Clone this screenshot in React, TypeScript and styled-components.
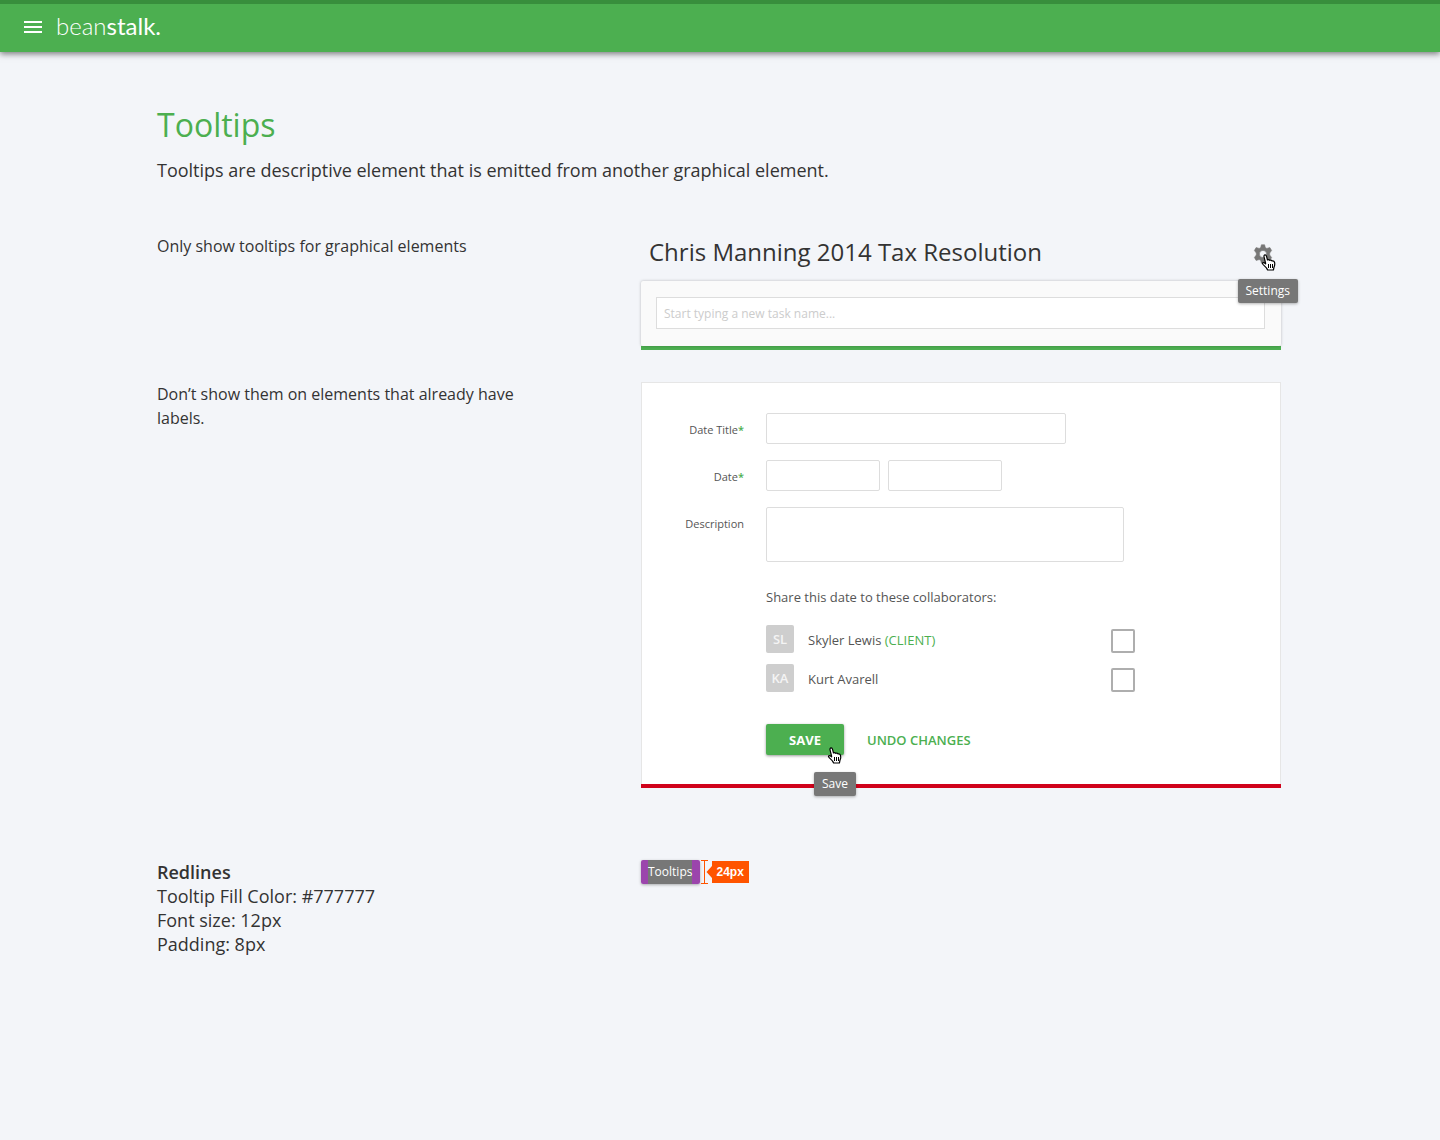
import React from 'react';
import styled, { createGlobalStyle } from 'styled-components';

const green = '#4caf50';
const red = '#d0021b';

const GlobalStyle = createGlobalStyle`
  *, *::before, *::after { box-sizing: border-box; }
  body {
    margin: 0;
    background: #f3f5f9;
    color: #333;
    font-family: "Open Sans", "Noto Sans", sans-serif;
  }
  input, textarea, button { font-family: inherit; }
`;

const Header = styled.header`
  display: flex;
  align-items: center;
  gap: 14px;
  height: 52px;
  padding: 0 24px 2px;
  border-top: 4px solid #388e3c;
  background: ${green};
  box-shadow: 0 2px 6px rgba(0, 0, 0, 0.5);
`;

const MenuButton = styled.button`
  display: flex;
  flex-direction: column;
  gap: 3px;
  width: 18px;
  padding: 0;
  border: 0;
  background: none;
  cursor: pointer;
`;

const MenuLine = styled.span`
  height: 2px;
  background: #fff;
`;

const Logo = styled.a`
  padding-bottom: 2px;
  color: #fff;
  font: 400 24px/36px Lato, sans-serif;
  text-decoration: none;
`;

const LogoLight = styled.span`
  font-weight: 300;
`;

const Main = styled.main`
  padding: 51px 159px 48px 157px;
`;

const Title = styled.h1`
  margin: 0;
  color: ${green};
  font-size: 32px;
  font-weight: 400;
  line-height: 44px;
`;

const Lead = styled.p`
  margin: 11px 0 0;
  font-size: 18px;
  line-height: 24px;
`;

const Section = styled.section<{ $top: number }>`
  display: grid;
  grid-template-columns: minmax(0, 1fr) minmax(0, 640px);
  align-items: start;
  margin-top: ${(p) => p.$top}px;
`;

const Rule = styled.p`
  max-width: 380px;
  margin: 0;
  font-size: 16px;
  line-height: 24px;
`;

const TaskHeader = styled.div`
  display: flex;
  align-items: flex-start;
  justify-content: space-between;
  height: 47px;
  padding: 0 8px;
`;

const TaskTitle = styled.h2`
  margin: 0;
  font-size: 24px;
  font-weight: 400;
  line-height: 36px;
`;

const Anchor = styled.div`
  position: relative;
  display: flex;
`;

const IconButton = styled.button`
  display: flex;
  padding: 10px 0 0;
  border: 0;
  background: none;
  cursor: pointer;
`;

const TooltipBox = styled.span`
  display: inline-block;
  height: 24px;
  padding: 0 8px;
  border-radius: 2px;
  background: #777;
  box-shadow: 0 1px 3px rgba(0, 0, 0, 0.3);
  color: #fff;
  font-size: 12px;
  line-height: 24px;
  white-space: nowrap;
`;

const FloatingTooltip = styled(TooltipBox)<{ $top: number; $right: number }>`
  position: absolute;
  z-index: 1;
  top: ${(p) => p.$top}px;
  right: ${(p) => p.$right}px;
`;

const Pointer = styled.svg<{ $top: number; $right: number }>`
  position: absolute;
  z-index: 1;
  top: ${(p) => p.$top}px;
  right: ${(p) => p.$right}px;
  pointer-events: none;
`;

const Example = styled.div<{ $verdict: string }>`
  border-bottom: 4px solid ${(p) => p.$verdict};
`;

const TaskCard = styled.div`
  padding: 16px 16px 17px 15px;
  border-radius: 2px;
  background: #fafafa;
  box-shadow: 0 0 3px rgba(0, 0, 0, 0.25);
`;

const TaskInput = styled.input`
  display: block;
  width: 100%;
  height: 32px;
  padding: 0 7px;
  border: 1px solid #ddd;
  background: #fff;
  font-size: 12px;
  outline: 0;
  &::placeholder { color: #ccc; opacity: 1; }
`;

const FormCard = styled.form`
  display: flex;
  flex-direction: column;
  gap: 16px;
  padding: 30px 24px 29px;
  border: 1px solid #e6e6e6;
  border-bottom: 0;
  background: #fff;
`;

const FieldRow = styled.div`
  display: grid;
  grid-template-columns: 78px minmax(0, 1fr);
  column-gap: 22px;
`;

const FieldLabel = styled.label`
  height: 31px;
  color: #555;
  font-size: 11px;
  line-height: 33px;
  text-align: right;
`;

const Required = styled.span`
  color: ${green};
  font-weight: 600;
`;

const Inputs = styled.div`
  display: flex;
  gap: 8px;
`;

const TextInput = styled.input<{ $width: number }>`
  width: ${(p) => p.$width}px;
  height: 31px;
  padding: 0 8px;
  border: 1px solid #ddd;
  border-radius: 2px;
  font-size: 12px;
  outline: 0;
`;

const TextArea = styled.textarea`
  width: 358px;
  height: 55px;
  padding: 8px;
  border: 1px solid #ddd;
  border-radius: 2px;
  font-size: 12px;
  resize: none;
  outline: 0;
`;

const Share = styled.fieldset`
  display: flex;
  flex-direction: column;
  gap: 11px;
  margin: 8px 0 0 100px;
  padding: 0;
  border: 0;
  color: #555;
  font-size: 13px;
`;

const ShareTitle = styled.legend`
  margin-bottom: 17px;
  padding: 0;
  line-height: 22px;
`;

const Person = styled.label`
  display: grid;
  grid-template-columns: 28px minmax(0, 1fr) 24px;
  grid-template-rows: 28px;
  column-gap: 14px;
  width: 369px;
  line-height: 30px;
`;

const Avatar = styled.span`
  border-radius: 2px;
  background: #cecece;
  color: #f4f4f4;
  font-weight: 600;
  line-height: 28px;
  text-align: center;
`;

const Role = styled.span`
  color: ${green};
`;

const CheckBox = styled.input`
  appearance: none;
  align-self: end;
  width: 24px;
  height: 24px;
  margin: 0;
  border: 2px solid #aeaeae;
  border-radius: 2px;
  background: #fff;
`;

const Actions = styled.div`
  display: flex;
  gap: 23px;
  margin: 16px 0 0 100px;
`;

const SaveButton = styled.button`
  width: 78px;
  height: 31px;
  padding: 0;
  border: 0;
  border-radius: 2px;
  background: ${green};
  box-shadow: 0 1px 3px rgba(0, 0, 0, 0.4);
  color: #fff;
  font-size: 13px;
  font-weight: 700;
`;

const TextButton = styled.button`
  padding: 0;
  border: 0;
  background: none;
  color: ${green};
  font-size: 13px;
  font-weight: 600;
`;

const Specs = styled.div`
  font-size: 18px;
  line-height: 24px;
`;

const SpecTitle = styled.h2`
  margin: 0;
  font-size: inherit;
  font-weight: 600;
`;

const SpecLine = styled.p`
  margin: 0;
`;

const Measure = styled.div`
  display: flex;
  align-items: center;
`;

const PaddedTooltip = styled(TooltipBox)`
  padding-left: 7px;
  background: linear-gradient(to right, #9b45ac 7px, #777 7px, #777 calc(100% - 8px), #9b45ac calc(100% - 8px));
`;

const SizeTag = styled.span`
  height: 22px;
  padding: 0 5px 0 4px;
  background: #ff5400;
  color: #fff;
  font: 700 12px/22px "Liberation Sans", Arial, sans-serif;
`;

const HandPointer = (props: { top: number; right: number }) => (
  <Pointer $top={props.top} $right={props.right} width="15" height="17" viewBox="0 0 15 17" aria-hidden="true">
    <path
      d="M4.6 9.2 3.100 3.200Q2.600 1.200 3.900.9 5.200.7 5.600 2.600L6.500 6Q7.800 5.200 8.800 6.300 10.200 5.600 11 6.900 12.900 6.400 13.500 8.200 14.200 10.800 13 13.200L12.400 16H6.600Q5.800 13.800 3.200 11.600 1 9.800 1.600 8.900 2.700 8 4.600 9.800Z"
      fill="#fff"
      stroke="#000"
      strokeWidth="1.2"
      strokeLinejoin="round"
    />
    <path d="M7.500 10v4M9.500 10v4M11.500 10v4" stroke="#000" fill="none" />
  </Pointer>
);

const GearIcon = () => (
  <svg width="20" height="20" viewBox="0 0 20 20" aria-hidden="true">
    <path
      fillRule="evenodd"
      fill="#777"
      stroke="#777"
      strokeWidth=".6"
      strokeLinejoin="round"
      d="M8.400.8h3.200L12.300 3.600 13.800 4.400 16.900 3.600 18.600 6.500 16.700 9v2L18.600 13.500 16.900 16.400 13.800 15.600 12.300 16.400 11.600 19.200H8.400L7.700 16.400 6.200 15.600 3.100 16.400 1.400 13.500 3.300 11V9L1.400 6.500 3.100 3.600 6.200 4.400 7.700 3.600ZM10 6.400a3.600 3.600 0 1 0 0 7.200 3.600 3.600 0 0 0 0-7.200Z"
    />
  </svg>
);

const people = [
  { initials: 'SL', name: 'Skyler Lewis', role: '(CLIENT)' },
  { initials: 'KA', name: 'Kurt Avarell', role: '' },
];

export default function App() {
  return (
    <>
      <GlobalStyle />
      <Header>
        <MenuButton type="button" aria-label="Menu">
          <MenuLine />
          <MenuLine />
          <MenuLine />
        </MenuButton>
        <Logo href="#">
          <LogoLight>bean</LogoLight>stalk.
        </Logo>
      </Header>
      <Main>
        <Title>Tooltips</Title>
        <Lead>Tooltips are descriptive element that is emitted from another graphical element.</Lead>

        <Section $top={52}>
          <Rule>Only show tooltips for graphical elements</Rule>
          <Example $verdict={green}>
            <TaskHeader>
              <TaskTitle>Chris Manning 2014 Tax Resolution</TaskTitle>
              <Anchor>
                <IconButton type="button" aria-label="Settings">
                  <GearIcon />
                </IconButton>
                <HandPointer top={20} right={-3} />
                <FloatingTooltip role="tooltip" $top={45} $right={-25}>Settings</FloatingTooltip>
              </Anchor>
            </TaskHeader>
            <TaskCard>
              <TaskInput type="text" aria-label="New task name" placeholder="Start typing a new task name..." />
            </TaskCard>
          </Example>
        </Section>

        <Section $top={32}>
          <Rule>Don’t show them on elements that already have labels.</Rule>
          <Example $verdict={red}>
            <FormCard onSubmit={(e) => e.preventDefault()}>
              <FieldRow>
                <FieldLabel htmlFor="date-title">Date Title<Required>*</Required></FieldLabel>
                <TextInput id="date-title" type="text" $width={300} />
              </FieldRow>
              <FieldRow>
                <FieldLabel htmlFor="date">Date<Required>*</Required></FieldLabel>
                <Inputs>
                  <TextInput id="date" type="text" $width={114} />
                  <TextInput type="text" aria-label="Time" $width={114} />
                </Inputs>
              </FieldRow>
              <FieldRow>
                <FieldLabel htmlFor="description">Description</FieldLabel>
                <TextArea id="description" />
              </FieldRow>
              <Share>
                <ShareTitle>Share this date to these collaborators:</ShareTitle>
                {people.map((p) => (
                  <Person key={p.initials}>
                    <Avatar>{p.initials}</Avatar>
                    <span>{p.name} {p.role && <Role>{p.role}</Role>}</span>
                    <CheckBox type="checkbox" />
                  </Person>
                ))}
              </Share>
              <Actions>
                <Anchor>
                  <SaveButton type="submit">SAVE</SaveButton>
                  <HandPointer top={23} right={2} />
                  <FloatingTooltip role="tooltip" $top={48} $right={-12}>Save</FloatingTooltip>
                </Anchor>
                <TextButton type="reset">UNDO CHANGES</TextButton>
              </Actions>
            </FormCard>
          </Example>
        </Section>

        <Section $top={72}>
          <Specs>
            <SpecTitle>Redlines</SpecTitle>
            <SpecLine>Tooltip Fill Color: #777777</SpecLine>
            <SpecLine>Font size: 12px</SpecLine>
            <SpecLine>Padding: 8px</SpecLine>
          </Specs>
          <Measure>
            <PaddedTooltip>Tooltips</PaddedTooltip>
            <svg width="12" height="24" viewBox="0 0 12 24" aria-hidden="true">
              <path d="M1 .5h7M4.500 .5v23M1 23.500h7" stroke="#ff5400" fill="none" />
              <path d="M12 6v12L6.500 12Z" fill="#ff5400" />
            </svg>
            <SizeTag>24px</SizeTag>
          </Measure>
        </Section>
      </Main>
    </>
  );
}
